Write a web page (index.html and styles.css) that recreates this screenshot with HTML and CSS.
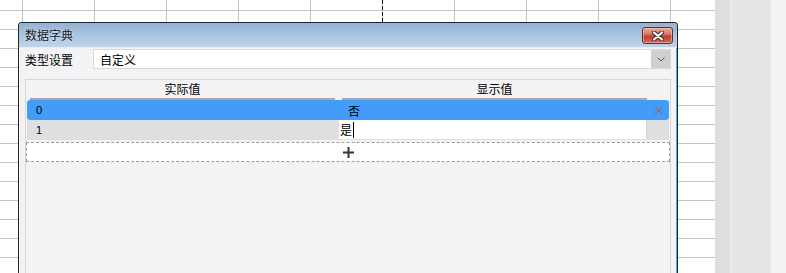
FILE: index.html
```html
<!DOCTYPE html>
<html lang="zh-CN">
<head>
    <meta charset="UTF-8">
    <title>数据字典</title>
    <link rel="stylesheet" href="styles.css">
</head>
<body>
    <div class="workspace">
        <div class="sheet">
            <div class="page-break"></div>

            <div class="dialog">
                <div class="titlebar">
                    <span class="title">数据字典</span>
                    <button class="close-btn">
                        <svg width="12" height="10" viewBox="0 0 12 10">
                            <path d="M2 1.5 L10 8.5 M10 1.5 L2 8.5" stroke="#4a2a2a" stroke-width="4.2" stroke-linecap="round"/>
                            <path d="M2 1.5 L10 8.5 M10 1.5 L2 8.5" stroke="#ffffff" stroke-width="2.2" stroke-linecap="round"/>
                        </svg>
                    </button>
                </div>

                <div class="dialog-body">
                    <div class="field-row">
                        <span class="field-label">类型设置</span>
                        <div class="combo">
                            <span class="combo-text">自定义</span>
                            <span class="combo-arrow">
                                <svg width="8" height="5" viewBox="0 0 8 5">
                                    <path d="M0.5 0.5 L4 4 L7.5 0.5" fill="none" stroke="#555" stroke-width="1"/>
                                </svg>
                            </span>
                        </div>
                    </div>

                    <div class="dict-panel">
                        <div class="dict-head">
                            <div class="head-cell first">实际值</div>
                            <div class="head-cell second">显示值</div>
                            <div></div>
                        </div>

                        <div class="dict-row selected">
                            <div class="cell num">0</div>
                            <div class="cell text">否</div>
                            <div class="cell del">
                                <svg width="9" height="9" viewBox="0 0 9 9">
                                    <path d="M1 1 L8 8 M8 1 L1 8" stroke="#7c7c80" stroke-width="1.6"/>
                                </svg>
                            </div>
                        </div>

                        <div class="dict-row">
                            <div class="cell num">1</div>
                            <div class="cell editor">是<span class="caret"></span></div>
                            <div class="cell"></div>
                        </div>

                        <div class="add-row">
                            <svg width="11" height="11" viewBox="0 0 11 11">
                                <path d="M0 5.5 H11 M5.5 0 V11" stroke="#333" stroke-width="2"/>
                            </svg>
                        </div>
                    </div>
                </div>
            </div>
        </div>
        <div class="side side-a"></div>
        <div class="side side-line"></div>
        <div class="side side-b"></div>
        <div class="side side-c"></div>
    </div>
</body>
</html>
```

FILE: styles.css
```css
* {
    margin: 0;
    padding: 0;
    box-sizing: border-box;
}

body {
    font-family: "Noto Sans CJK SC", "Liberation Sans", sans-serif;
    font-size: 12px;
    color: #000;
    width: 786px;
    height: 273px;
    overflow: hidden;
    background: #f3f3f4;
}

.workspace {
    display: flex;
    height: 273px;
}

/* spreadsheet behind the dialog */
.sheet {
    position: relative;
    width: 715px;
    height: 273px;
    background-color: #ffffff;
    background-image:
        linear-gradient(to right, #c4c4c4 1px, transparent 1px),
        linear-gradient(to bottom, #c4c4c4 1px, transparent 1px);
    background-size: 72px 19px;
    background-position: 22px 10px;
}

.page-break {
    position: absolute;
    left: 382px;
    top: 0;
    width: 1px;
    height: 30px;
    background: repeating-linear-gradient(to bottom, #111 0 4px, transparent 4px 6px);
}

.side { height: 273px; }
.side-a { width: 15px; background: #dedede; }
.side-line { width: 1px; background: #f2f2f2; }
.side-b { width: 40px; background: #e6e6e6; }
.side-c { flex: 1; background: #f3f3f4; }

/* dialog window, cut off by the bottom of the view */
.dialog {
    position: absolute;
    left: 18px;
    top: 22px;
    width: 660px;
    height: 251px;
    border: 1px solid #262626;
    border-bottom: 0;
    border-radius: 4px 4px 0 0;
    background: #f3f3f5;
    overflow: hidden;
    display: flex;
    flex-direction: column;
}

.titlebar {
    height: 25px;
    flex-shrink: 0;
    display: flex;
    align-items: flex-start;
    padding: 4px 4px 0 6px;
    background: linear-gradient(to bottom, #94b1d2 0%, #a9c4e1 50%, #bcd5ec 100%);
    border-bottom: 1px solid #e8eef6;
}

.title {
    font-size: 12px;
    line-height: 16px;
    color: #1a1a1a;
    text-shadow: 0 0 3px rgba(255,255,255,0.7);
}

.close-btn {
    margin-left: auto;
    width: 31px;
    height: 17px;
    border: 1px solid #6a2a26;
    border-radius: 3px;
    background: linear-gradient(to bottom, #e3aba2 0%, #d47b6f 40%, #c0402f 55%, #d06a55 100%);
    box-shadow: inset 0 0 0 1px rgba(255,210,200,0.5);
    display: flex;
    align-items: center;
    justify-content: center;
}

.dialog-body {
    flex: 1;
    min-height: 0;
    padding: 1px 6px 0 6px;
    box-shadow: inset -1px 0 0 #3bb6e6;
}

.field-row {
    display: flex;
    align-items: center;
    height: 20px;
}

.field-label {
    width: 68px;
    font-size: 12px;
}

.combo {
    flex: 1;
    height: 20px;
    display: flex;
    align-items: center;
    background: #fff;
    border: 1px solid #d8d8db;
}

.combo-text {
    flex: 1;
    padding-left: 6px;
}

.combo-arrow {
    width: 19px;
    height: 18px;
    background: #cfcfd2;
    display: flex;
    align-items: center;
    justify-content: center;
}

/* dictionary table */
.dict-panel {
    margin-top: 10px;
    height: 200px;
    border: 1px solid #d6d6d9;
    padding: 0 1px;
}

.dict-head,
.dict-row {
    display: grid;
    grid-template-columns: 312px 308px 22px;
    height: 20px;
}

.head-cell {
    text-align: center;
    line-height: 18px;
    border-bottom: 2px solid #a9a9ab;
}

.head-cell.first { margin: 0 4px 0 3px; }
.head-cell.second { margin: 0 0 0 3px; }

.dict-row {
    background: #dfdfe2;
}

.dict-row.selected {
    background: #439cf7;
    border-radius: 3px;
}

.cell {
    display: flex;
    align-items: center;
}

.cell.num {
    font-family: "Liberation Sans", sans-serif;
    font-size: 11px;
    padding-left: 9px;
}

.cell.text {
    padding-left: 9px;
}

.cell.del {
    justify-content: center;
}

.cell.editor {
    background: #fff;
    padding-left: 1px;
    margin-bottom: 1px;
    border-right: 1px solid #d2d2d5;
}

.caret {
    width: 1px;
    height: 16px;
    background: #000;
    margin-left: 1px;
}

.add-row {
    margin: 2px -1px 0 -1px;
    height: 20px;
    background: #fff;
    border: 1px dashed #9a9a9c;
    display: flex;
    align-items: center;
    justify-content: center;
}
```
